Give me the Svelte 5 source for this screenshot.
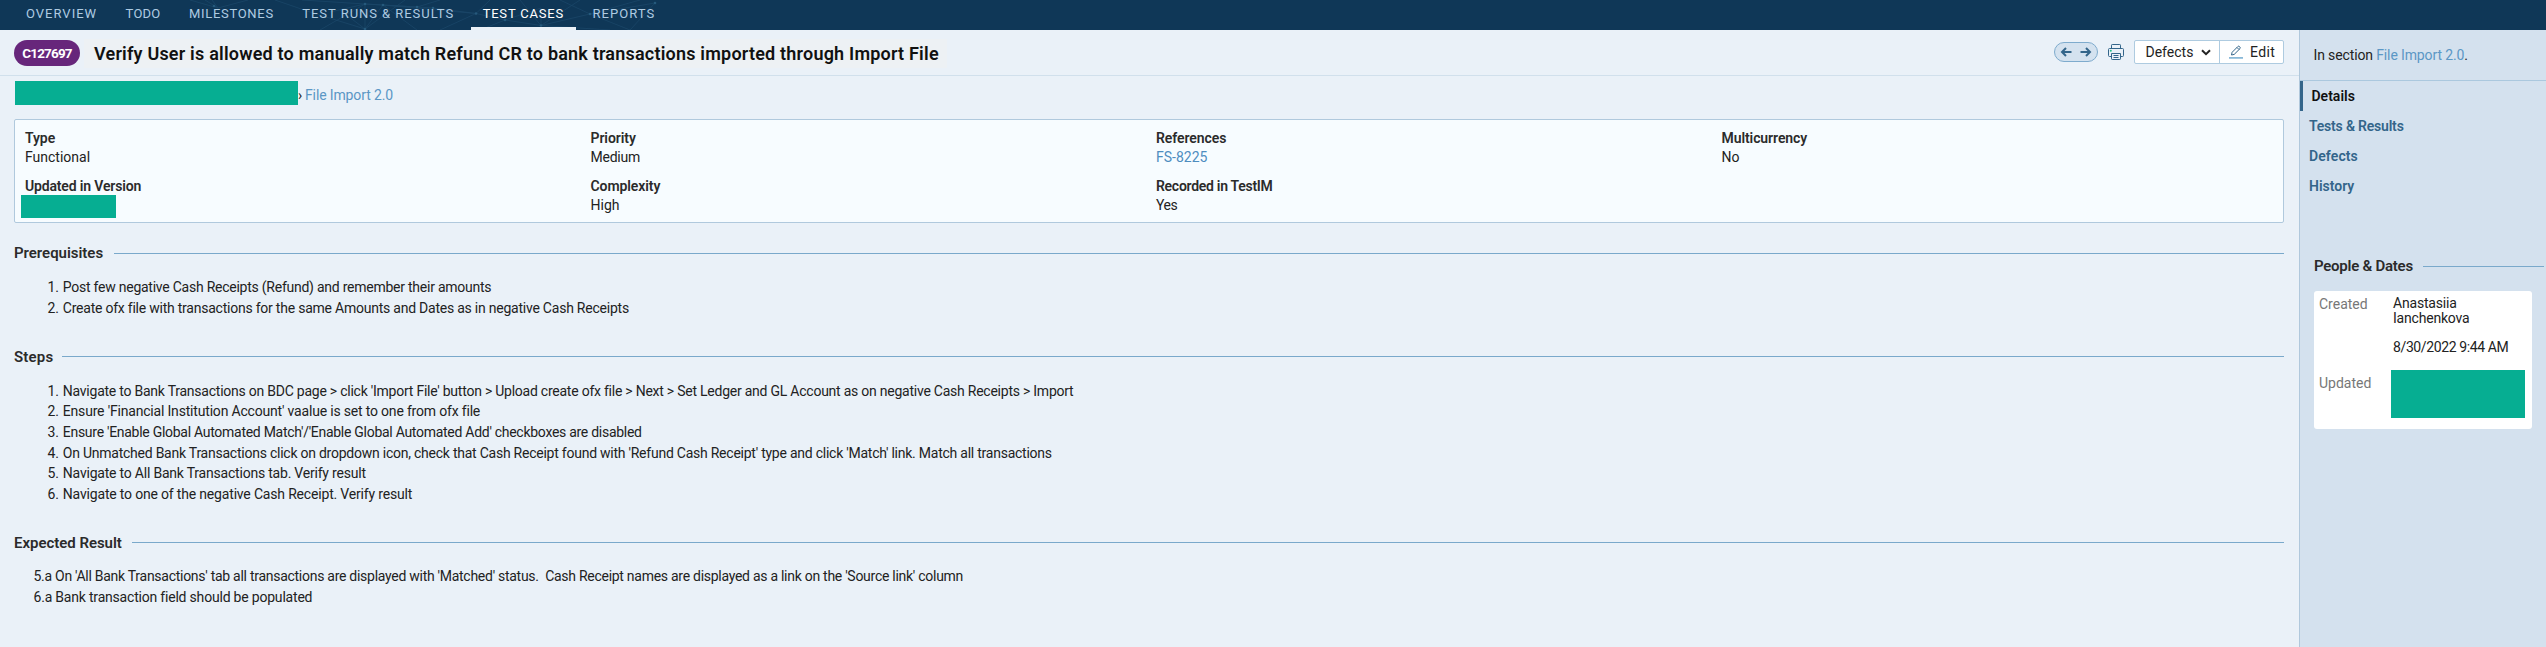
<script>
  const tabs = [
    { label: 'OVERVIEW', track: 1 },
    { label: 'TODO', track: 0.2 },
    { label: 'MILESTONES', track: 0.7 },
    { label: 'TEST RUNS & RESULTS', track: 0.95 },
    { label: 'TEST CASES', track: 0.8, active: true },
    { label: 'REPORTS', track: 1.05 }
  ];

  const fields = [
    { label: 'Type', value: 'Functional' },
    { label: 'Priority', value: 'Medium', track: -0.25 },
    { label: 'References', value: 'FS-8225', link: true },
    { label: 'Multicurrency', value: 'No' },
    { label: 'Updated in Version', redacted: true, labelTrack: -0.16 },
    { label: 'Complexity', value: 'High' },
    { label: 'Recorded in TestIM', value: 'Yes', labelTrack: -0.28, track: -0.4 }
  ];

  const prerequisites = [
    { text: 'Post few negative Cash Receipts (Refund) and remember their amounts', track: -0.245 },
    { text: 'Create ofx file with transactions for the same Amounts and Dates as in negative Cash Receipts', track: -0.23 }
  ];

  const steps = [
    { text: "Navigate to Bank Transactions on BDC page > click 'Import File' button > Upload create ofx file > Next > Set Ledger and GL Account as on negative Cash Receipts > Import", track: -0.238 },
    { text: "Ensure 'Financial Institution Account' vaalue is set to one from ofx file", track: -0.185 },
    { text: "Ensure 'Enable Global Automated Match'/'Enable Global Automated Add' checkboxes are disabled", track: -0.28 },
    { text: "On Unmatched Bank Transactions click on dropdown icon, check that Cash Receipt found with 'Refund Cash Receipt' type and click 'Match' link. Match all transactions", track: -0.24 },
    { text: 'Navigate to All Bank Transactions tab. Verify result', track: -0.21 },
    { text: 'Navigate to one of the negative Cash Receipt. Verify result', track: -0.18 }
  ];

  const expected = [
    { text: "5.a On 'All Bank Transactions' tab all transactions are displayed with 'Matched' status.\u00a0 Cash Receipt names are displayed as a link on the 'Source link' column", track: -0.272 },
    { text: '6.a Bank transaction field should be populated', track: -0.2 }
  ];

  const sideLinks = [
    { label: 'Details', active: true },
    { label: 'Tests & Results', track: -0.2 },
    { label: 'Defects', track: 0.1 },
    { label: 'History' }
  ];

  const nodes = [[214, 6], [365, 4], [383, 5], [365, 29], [417, 7], [433, 8], [476, 13.5], [505, 20], [541, 25.5], [590, 14], [655, 3]];
</script>

{#snippet list(items)}
  <ol>
    {#each items as item, i}
      <li><span class="num">{i + 1}.</span><span style="letter-spacing: {item.track}px">{item.text}</span></li>
    {/each}
  </ol>
{/snippet}

<div class="page">
  <nav class="topbar">
    <svg class="mesh" width="700" height="30" viewBox="0 0 700 30" aria-hidden="true">
      <path d="M190 0L218 8L248 0M205 0L218 8L212 0M275 0L310 12L365 29M302 0L365 4L417 7M330 12L365 4L383 5L433 8M365 4L320 30M365 4L365 29L383 5L417 30M365 29L340 10M365 29L405 0M383 5L476 13.5L433 8M417 7L440 0M476 13.5L490 0M476 13.5L440 30M476 13.5L505 20L541 25.5L590 14L655 3M505 20L480 30M505 20L541 8L541 25.5L520 0M541 25.5L580 0M541 25.5L610 30M590 14L560 0M590 14L630 30L655 3M590 14L640 0" />
      {#each nodes as [x, y]}
        <circle cx={x} cy={y} r="1.3" />
      {/each}
    </svg>
    {#each tabs as tab}
      <a class="tab" class:active={tab.active} style="letter-spacing: {tab.track}px">{tab.label}</a>
    {/each}
  </nav>

  <div class="body">
    <main>
      <header class="titlebar">
        <span class="badge">C127697</span>
        <h1>Verify User is allowed to manually match Refund CR to bank transactions imported through Import File</h1>
        <div class="actions">
          <div class="pager">
            <svg width="12" height="12" viewBox="0 0 12 12"><path d="M11.500 6H2M6 2L2 6l4 4" /></svg>
            <svg width="12" height="12" viewBox="0 0 12 12"><path d="M.5 6H10M6 2l4 4l-4 4" /></svg>
          </div>
          <svg class="printer" width="16" height="16" viewBox="0 0 16 16">
            <path d="M3.500 4V1.200q0-.7.7-.7h7.600q.7 0 .7.700V4M3.500 12.500H1.500q-1 0-1-1V5.500q0-1 1-1h13q1 0 1 1v6q0 1-1 1h-2M3.500 9.500h9v5.300q0 .7-.7.700H4.200q-.7 0-.7-.7zM5.500 11.500h5M5.500 13.500h5" />
            <circle cx="2.800" cy="6.700" r="1" />
          </svg>
          <div class="buttons">
            <button class="defects">Defects
              <svg width="10" height="7" viewBox="0 0 10 7"><path d="M1 1.200l4 4l4-4" /></svg>
            </button>
            <button class="edit">
              <svg width="14" height="14" viewBox="0 0 14 14">
                <path class="pen" d="M2.500 10L3.100 7.300L8.900 1.500q.7-.7 1.500 0l.6.6q.7.800 0 1.500L5.200 9.400zM8 2.500l2 2" />
                <path class="rule" d="M0 12.900h14" />
              </svg>
              Edit
            </button>
          </div>
        </div>
      </header>

      <div class="crumbs">
        <span class="redacted path"></span>
        <span class="sep">›</span>
        <a>File Import 2.0</a>
      </div>

      <section class="fields">
        {#each fields as f}
          <div class="field">
            <div class="label" style="letter-spacing: {f.labelTrack ?? -0.08}px">{f.label}</div>
            {#if f.redacted}
              <div class="redacted version"></div>
            {:else}
              <div class="value" class:link={f.link} style="letter-spacing: {f.track ?? 0}px">{f.value}</div>
            {/if}
          </div>
        {/each}
      </section>

      <h2>Prerequisites</h2>
      {@render list(prerequisites)}

      <h2 class="steps">Steps</h2>
      {@render list(steps)}

      <h2>Expected Result</h2>
      <div class="expected">
        {#each expected as line}
          <p style="letter-spacing: {line.track}px">{line.text}</p>
        {/each}
      </div>
    </main>

    <aside>
      <div class="section-ref">In section <a>File Import 2.0</a>.</div>
      <nav class="side">
        {#each sideLinks as l}
          <a class:active={l.active} style="letter-spacing: {l.track ?? 0}px">{l.label}</a>
        {/each}
      </nav>
      <h2>People &amp; Dates</h2>
      <div class="people">
        <span class="key">Created</span>
        <div class="who">
          <div>Anastasiia<br />Ianchenkova</div>
          <div class="date">8/30/2022 9:44 AM</div>
        </div>
        <span class="key updated">Updated</span>
        <div class="redacted author"></div>
      </div>
    </aside>
  </div>
</div>

<style>
  :global(body) {
    margin: 0;
    background: #eaf1f8;
  }
  .page {
    box-sizing: border-box;
    height: 647px;
    display: flex;
    flex-direction: column;
    overflow: hidden;
    font: 14px/18px Roboto, 'Liberation Sans', sans-serif;
    color: #222;
    background: #eaf1f8;
    white-space: nowrap;
  }
  .topbar {
    position: relative;
    display: flex;
    gap: 4.500px;
    height: 30px;
    padding-left: 14px;
    background: #0f3757;
  }
  .mesh {
    position: absolute;
    left: 0;
    top: 0;
    fill: #25597c;
    stroke: none;
  }
  .mesh path {
    fill: none;
    stroke: #1a4668;
    stroke-width: 0.8;
  }
  .tab {
    position: relative;
    padding: 0 12px;
    font-size: 13px;
    line-height: 27px;
    color: #aecbe2;
    border-bottom: 3px solid transparent;
  }
  .tab.active {
    color: #fff;
    border-color: #eaf1f8;
  }
  .body {
    display: flex;
    flex: 1;
  }
  main {
    flex: 1;
    display: flex;
    flex-direction: column;
  }
  .titlebar {
    display: flex;
    align-items: flex-start;
    height: 45px;
    padding: 0 15px 0 14px;
    border-bottom: 1px solid #d1e0ec;
  }
  .badge {
    width: 66px;
    height: 26px;
    margin-top: 10px;
    border-radius: 13px;
    background: #67267b;
    color: #fff;
    font-size: 13.5px;
    font-weight: 700;
    line-height: 26px;
    letter-spacing: -0.85px;
    text-align: center;
  }
  h1 {
    margin: 9px 0 0 4px;
    padding: 0 8px 0 10px;
    background: #edf1f4;
    color: #111;
    font-size: 18px;
    font-weight: 600;
    line-height: 29px;
    letter-spacing: 0.205px;
  }
  .actions {
    display: flex;
    align-items: flex-start;
    margin-left: auto;
  }
  .pager {
    box-sizing: border-box;
    display: flex;
    align-items: center;
    justify-content: space-between;
    width: 44px;
    height: 20px;
    margin-top: 12px;
    padding: 0 5px;
    border: 1px solid #7eabcd;
    border-radius: 10px;
    background: #d4e2ef;
  }
  .pager svg {
    fill: none;
    stroke: #33658a;
    stroke-width: 2;
  }
  .printer {
    margin: 14px 10px 0;
    fill: none;
    stroke: #33658a;
  }
  .printer circle {
    fill: #1fc28b;
    stroke: none;
  }
  .buttons {
    box-sizing: border-box;
    display: flex;
    width: 150px;
    height: 24px;
    margin-top: 10px;
    border: 1px solid #aecbe0;
    border-radius: 2px;
    background: #fff;
  }
  button {
    display: flex;
    align-items: center;
    padding: 0;
    border: 0;
    background: none;
    font: inherit;
    color: #222;
  }
  .defects {
    width: 84px;
    padding-left: 10.500px;
    gap: 7.500px;
  }
  .defects svg {
    fill: none;
    stroke: #222;
    stroke-width: 2;
  }
  .edit {
    flex: 1;
    gap: 7px;
    padding-left: 9px;
    border-left: 1px solid #aecbe0;
    letter-spacing: 0.4px;
  }
  .edit .pen {
    fill: none;
    stroke: #33658a;
  }
  .edit .rule {
    stroke: #7cb0d3;
    stroke-width: 1.6;
  }
  .crumbs {
    display: flex;
    height: 43px;
    padding-left: 15px;
  }
  .redacted {
    background: #06ae92;
  }
  .path {
    width: 283px;
    height: 24px;
    margin-top: 5px;
  }
  .sep {
    width: 7px;
    margin-top: 10px;
  }
  .crumbs a {
    margin-top: 10px;
    color: #5b97c5;
    letter-spacing: -0.13px;
  }
  .fields {
    box-sizing: border-box;
    display: grid;
    grid-template-columns: repeat(4, 565.500px);
    grid-auto-rows: 37px;
    row-gap: 11px;
    width: 2270px;
    height: 104px;
    margin-left: 14px;
    padding: 9px 0 0 10px;
    border: 1px solid #b0c9dd;
    border-radius: 2px;
    background: #f7fcff;
  }
  .label {
    font-weight: 600;
    color: #2b2b2b;
    margin-bottom: 1px;
  }
  .value.link {
    color: #4e8dbf;
  }
  .version {
    width: 95px;
    height: 23px;
    margin: -1px 0 0 -4px;
  }
  h2 {
    display: flex;
    align-items: center;
    gap: 10.500px;
    margin: 29.600px 15px 0 14px;
    font-size: 15px;
    font-weight: 600;
    line-height: 18px;
    letter-spacing: -0.03px;
    color: #2b2b2b;
  }
  h2::after {
    content: '';
    flex: 1;
    height: 1px;
    background: #7aa9cb;
  }
  .fields + h2 {
    margin-top: 21px;
  }
  h2.steps {
    letter-spacing: 0.2px;
    gap: 8.500px;
  }
  ol {
    margin: 15px 0 0;
    padding: 0 0 0 47.500px;
    list-style: none;
  }
  li {
    display: flex;
    line-height: 20.600px;
  }
  .num {
    width: 15.300px;
  }
  .expected {
    margin: 14.500px 0 0 33.500px;
    line-height: 20.600px;
  }
  p {
    margin: 0;
  }
  aside {
    box-sizing: border-box;
    width: 247px;
    border-left: 1px solid #b0c8dc;
    background: #d4e1ee;
  }
  .section-ref {
    height: 34px;
    padding: 16px 0 0 13.500px;
    border-bottom: 1px solid #abc8de;
    letter-spacing: -0.13px;
  }
  .section-ref a {
    color: #5b97c5;
  }
  .side {
    display: flex;
    flex-direction: column;
  }
  .side a {
    padding-left: 9px;
    line-height: 30px;
    font-weight: 600;
    color: #33658a;
  }
  .side a.active {
    padding-left: 8.500px;
    border-left: 3px solid #33658a;
    color: #111;
  }
  aside h2 {
    margin: 56px 2px 0 14px;
    letter-spacing: -0.25px;
  }
  .people {
    box-sizing: border-box;
    display: grid;
    grid-template-columns: 72px 1fr;
    grid-template-rows: 74px 48px;
    width: 218px;
    height: 138px;
    margin: 16px 0 0 14px;
    padding: 5px 7px 0 5px;
    border-radius: 3px;
    background: #fff;
    line-height: 16px;
  }
  .key {
    color: #777;
  }
  .who {
    padding-left: 2px;
    line-height: 15px;
    letter-spacing: -0.2px;
  }
  .date {
    margin-top: 14px;
    letter-spacing: -0.38px;
  }
  .updated {
    padding-top: 5px;
  }
  .author {
    height: 48px;
  }
</style>
